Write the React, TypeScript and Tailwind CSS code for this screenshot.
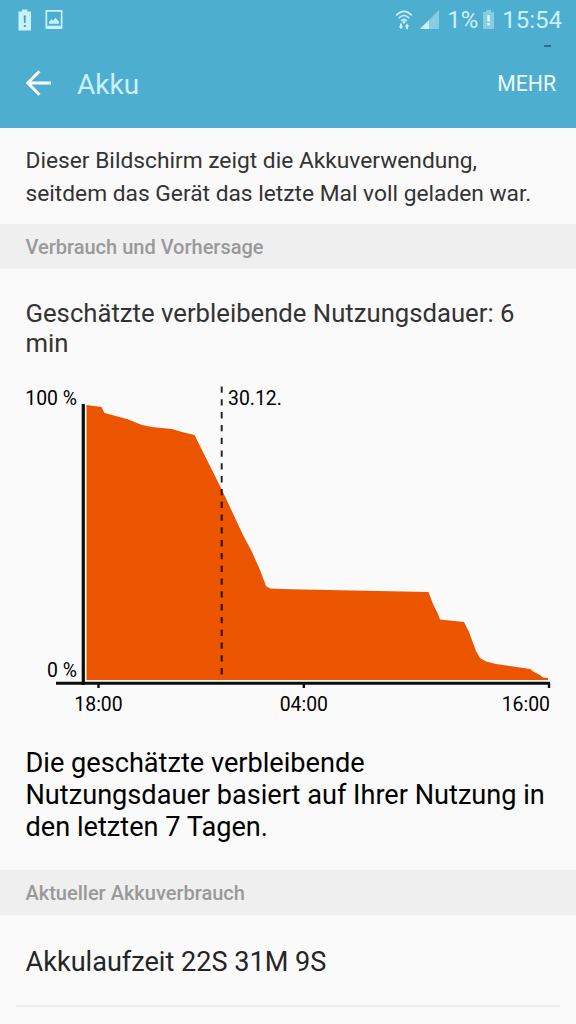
type SectionHeaderProps = {
  title: string;
};

const BATTERY_LEVEL =
  "86.5,680 86.5,405 101.5,407 104.5,413 127,419 142,425 152,427 172,429 182,432 194.5,435 222,490 236,520 243,535 252,552 260,570 266,586 270,588.5 290,589.3 428.5,592 433,604 438,614 440,619.5 464,622 469,632 476,651 480,658 486,661.5 496,664 530,669 534,672 540,675 543,677.5 548,678 548,680";

const BatteryAlertIcon = () => (
  <svg width="14" height="22" viewBox="0 0 14 22" className="text-[#c9f1fb]">
    <path d="M0.5 2.5H4V0.5H9.5V2.5H13V21.5H0.5Z" fill="currentColor" />
    <path d="M5.7 6.5H7.8L7.5 14H6Z M5.8 16H7.7V18H5.8Z" fill="#4a9dbb" />
  </svg>
);

const PictureIcon = () => (
  <svg width="18" height="20" viewBox="0 0 18 20" className="text-[#c9f1fb]">
    <path
      d="M1 0H17Q17.5 0 17.5 0.5V18Q17.5 19 16.5 19H1.5Q0.5 19 0.5 18V0.5Q0.5 0 1 0ZM2.2 1.7V15.7H15.8V1.7Z"
      fill="currentColor"
      fillRule="evenodd"
    />
    <path d="M4 13.7V12L6.5 9.3L8.3 10.8L10.5 7.8L12 9.5L14 11.5V13.7Z" fill="currentColor" />
  </svg>
);

const WifiIcon = () => (
  <svg width="18" height="20" viewBox="0 0 18 20" fill="none" className="text-[#c9f1fb]">
    <g stroke="currentColor" strokeWidth="1.7">
      <path d="M1.2 5.4Q9 -2.8 16.8 5.4" />
      <path d="M3.8 8.2Q9 2.8 14.2 8.2" />
      <path d="M6.2 10.8Q9 7.8 11.8 10.8" />
    </g>
    <circle cx="9" cy="12" r="1.6" fill="currentColor" />
    <path d="M5 13.5H7V16.2H8.4L6 19.2L3.6 16.2H5Z" fill="currentColor" />
    <path d="M11 19.2H13V16.5H14.4L12 13.5L9.6 16.5H11Z" fill="currentColor" />
  </svg>
);

const SignalIcon = () => (
  <svg width="19" height="19" viewBox="0 0 19 19">
    <path d="M0 19L19 0V19Z" fill="#86cce3" />
    <path d="M0 19L9 10V19Z" fill="#c9f1fb" />
  </svg>
);

const BatteryLowIcon = () => (
  <svg width="11" height="19" viewBox="0 0 11 19">
    <path d="M0 2H3V0H8V2H11V19H0Z" fill="#86cce3" />
    <path d="M4.4 5H6.7V11.5H4.4Z M4.4 13H6.7V15.3H4.4Z" fill="#effcff" />
  </svg>
);

const StatusBar = () => (
  <div className="flex h-10 items-start justify-between pr-[14px] pl-[18px] text-[#c9f1fb]">
    <div className="flex items-start gap-[13px] pt-[9px]">
      <BatteryAlertIcon />
      <div className="pt-px">
        <PictureIcon />
      </div>
    </div>
    <div className="flex items-start text-[24px] leading-[28px]">
      <div className="pt-[10px]">
        <WifiIcon />
      </div>
      <div className="pt-[10px] pl-[7px]">
        <SignalIcon />
      </div>
      <span className="pt-[6px] pl-[8px]">1%</span>
      <div className="pt-[10px] pl-[5px]">
        <BatteryLowIcon />
      </div>
      <span className="pt-[6px] pl-[8px]">15:54</span>
    </div>
  </div>
);

const AppBar = () => (
  <header className="relative h-[128px] bg-[#4eaed0]">
    <StatusBar />
    <div className="absolute top-[45px] left-[544px] h-[2px] w-[7px] bg-[#276f88]" />
    <div className="flex h-[88px] items-center pr-5 pl-[26px]">
      <svg width="26" height="26" viewBox="0 0 26 26" fill="none" className="-mt-[3px]">
        <path d="M25 13H2M13.5 1.3L1.8 13L13.5 24.7" stroke="#fff" strokeWidth="3" />
      </svg>
      <h1 className="pt-px pl-[25px] text-[28px] text-[#c9f1fb] leading-[36px]">Akku</h1>
      <button type="button" className="ml-auto text-[21.2px] text-[#edfbff] leading-[28px]">
        MEHR
      </button>
    </div>
  </header>
);

const SectionHeader = ({ title }: SectionHeaderProps) => (
  <h2 className="h-[44.5px] bg-[#efefef] pl-[25.5px] font-medium text-[#999] text-[20px] leading-[46px]">
    {title}
  </h2>
);

const BatteryChart = () => (
  <svg
    width="576"
    height="370"
    viewBox="0 359 576 370"
    className="block font-[Roboto,sans-serif] text-[19.4px]"
  >
    <polygon points={BATTERY_LEVEL} fill="#eb5500" />
    <path d="M83.3 404V685" stroke="#0a0f0b" strokeWidth="3.2" />
    <path d="M56 683.2H550" stroke="#0a0f0b" strokeWidth="3" />
    <path d="M98.5 683V688M303.8 683V688M549 683V688" stroke="#0a0f0b" strokeWidth="2.4" />
    <path d="M221.7 386.5V675" stroke="#000" strokeOpacity="0.85" strokeWidth="2" strokeDasharray="6.3 6.5" />
    <text x="77" y="404.5" textAnchor="end">100 %</text>
    <text x="77" y="677" textAnchor="end">0 %</text>
    <text x="228" y="404.5">30.12.</text>
    <text x="98.5" y="710.5" textAnchor="middle">18:00</text>
    <text x="303.8" y="710.5" textAnchor="middle">04:00</text>
    <text x="550" y="710.5" textAnchor="end">16:00</text>
  </svg>
);

const App = () => {
  return (
    <main className="h-[1024px] w-[576px] overflow-hidden bg-[#fafafa] font-[Roboto,sans-serif] text-[#333]">
      <AppBar />
      <p className="h-24 whitespace-nowrap pt-[17px] pl-[25.5px] text-[22.75px] leading-[32.5px]">
        Dieser Bildschirm zeigt die Akkuverwendung,
        <br />
        seitdem das Gerät das letzte Mal voll geladen war.
      </p>
      <SectionHeader title="Verbrauch und Vorhersage" />
      <p className="h-[90.5px] whitespace-nowrap pt-[29px] pl-[25.5px] text-[25.7px] leading-[30px]">
        Geschätzte verbleibende Nutzungsdauer: 6
        <br />
        min
      </p>
      <BatteryChart />
      <p className="h-[141px] whitespace-nowrap pt-[18px] pl-[25.5px] text-[27.15px] text-black leading-[32px]">
        Die geschätzte verbleibende
        <br />
        Nutzungsdauer basiert auf Ihrer Nutzung in
        <br />
        den letzten 7 Tagen.
      </p>
      <SectionHeader title="Aktueller Akkuverbrauch" />
      <div className="mr-4 ml-4 h-[92.5px] border-[#eee] border-b-2 pt-[31.5px] pl-[9.5px] text-[#252525] text-[27.1px] leading-[32px]">
        Akkulaufzeit 22S 31M 9S
      </div>
    </main>
  );
};

export default App;
